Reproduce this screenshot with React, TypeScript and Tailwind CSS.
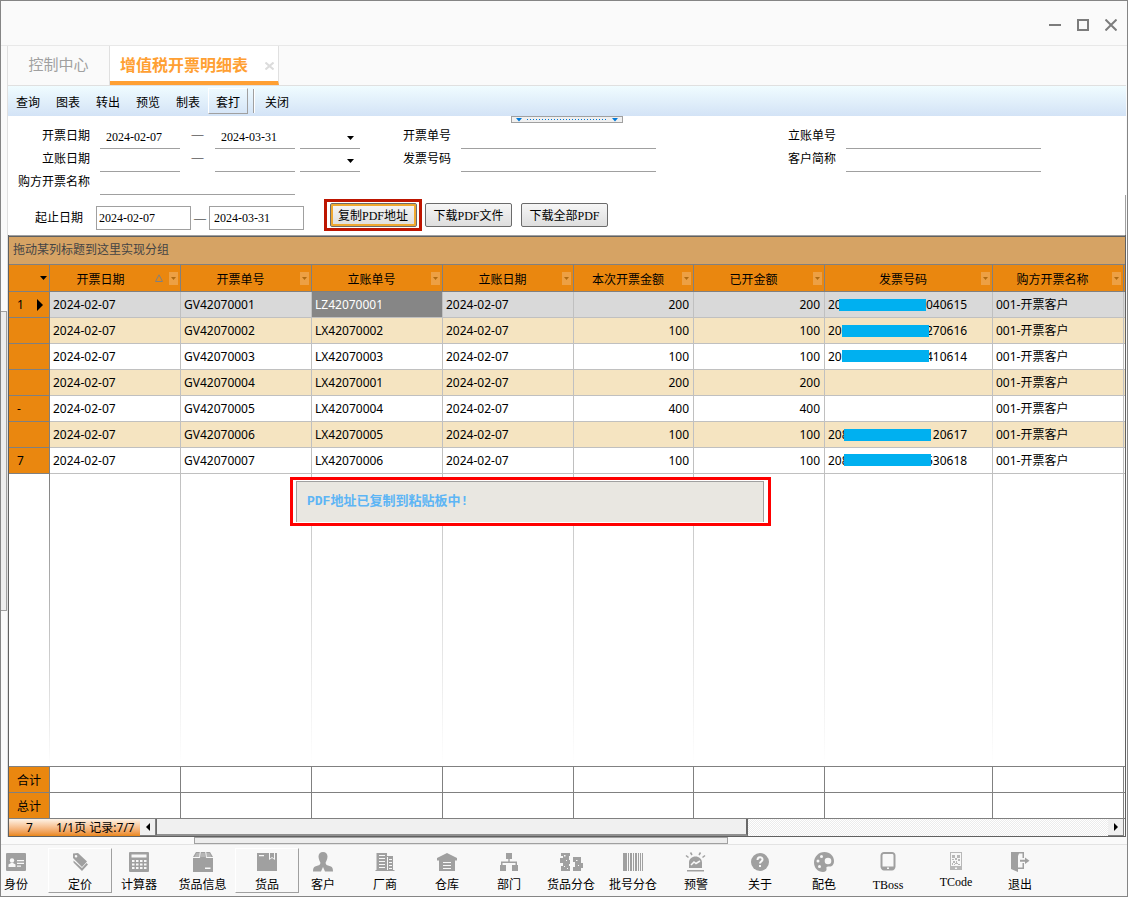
import React from 'react';
import clsx from 'clsx';

type Column = {
  key: string;
  title: string;
  width: string;
  align?: 'right';
  sorted?: boolean;
};

const columns: Column[] = [
  { key: 'invoiceDate', title: '开票日期', width: 'w-[131px]', sorted: true },
  { key: 'invoiceNo', title: '开票单号', width: 'w-[131px]' },
  { key: 'ledgerNo', title: '立账单号', width: 'w-[131px]' },
  { key: 'ledgerDate', title: '立账日期', width: 'w-[131px]' },
  { key: 'amount', title: '本次开票金额', width: 'w-[120px]', align: 'right' },
  { key: 'billed', title: '已开金额', width: 'w-[131px]', align: 'right' },
  { key: 'taxNo', title: '发票号码', width: 'w-[168px]' },
  { key: 'buyer', title: '购方开票名称', width: 'w-[131px]' },
];

type TaxNo = { head: string; tail: string; mask: string };

type Row = {
  mark: string;
  invoiceNo: string;
  ledgerNo: string;
  amount: number;
  taxNo?: TaxNo;
};

const rows: Row[] = [
  { mark: '1', invoiceNo: 'GV42070001', ledgerNo: 'LZ42070001', amount: 200, taxNo: { head: '20', tail: '040615', mask: 'left-[11px] top-0.5' } },
  { mark: '', invoiceNo: 'GV42070002', ledgerNo: 'LX42070002', amount: 100, taxNo: { head: '20', tail: '270616', mask: 'left-[14px] top-0.5' } },
  { mark: '', invoiceNo: 'GV42070003', ledgerNo: 'LX42070003', amount: 100, taxNo: { head: '20', tail: '410614', mask: 'left-[14px] top-px' } },
  { mark: '', invoiceNo: 'GV42070004', ledgerNo: 'LX42070001', amount: 200 },
  { mark: '-', invoiceNo: 'GV42070005', ledgerNo: 'LX42070004', amount: 400 },
  { mark: '', invoiceNo: 'GV42070006', ledgerNo: 'LX42070005', amount: 100, taxNo: { head: '208', tail: '120617', mask: 'left-4 top-0.5' } },
  { mark: '7', invoiceNo: 'GV42070007', ledgerNo: 'LX42070006', amount: 100, taxNo: { head: '208', tail: '530618', mask: 'left-4 top-px' } },
];

const toolbar = ['查询', '图表', '转出', '预览', '制表', '套打'];

const navItems = [
  { label: '身份', icon: 'id', box: 'w-[30px] mr-[17px]' },
  { label: '定价', icon: 'tag', box: 'w-16', raised: true },
  { label: '计算器', icon: 'calc', box: 'w-[54px]' },
  { label: '货品信息', icon: 'box', box: 'ml-1 w-[65px]' },
  { label: '货品', icon: 'goods', box: 'w-16', raised: true },
  { label: '客户', icon: 'person', box: 'w-12 mr-[7px]' },
  { label: '厂商', icon: 'building', box: 'w-[62px]' },
  { label: '仓库', icon: 'warehouse', box: 'w-[62px]' },
  { label: '部门', icon: 'org', box: 'w-[62px]' },
  { label: '货品分仓', icon: 'split', box: 'w-[62px]' },
  { label: '批号分仓', icon: 'barcode', box: 'w-[62px]' },
  { label: '预警', icon: 'alarm', box: 'w-16' },
  { label: '关于', icon: 'about', box: 'w-16' },
  { label: '配色', icon: 'palette', box: 'w-16' },
  { label: 'TBoss', icon: 'phone', box: 'w-16' },
  { label: 'TCode', icon: 'qr', box: 'ml-1 w-16', tight: true },
  { label: '退出', icon: 'exit', box: 'w-16' },
];

const icons: Record<string, React.ReactNode> = {
  id: (
    <>
      <rect x="0" y="1" width="20" height="18" rx="1" />
      <g fill="#f8f8f8">
        <circle cx="6" cy="8.500" r="2.200" />
        <path d="M2.500 15v-2.500l2.500-1.500h2l2.500 1.500V15z" />
        <path d="M11 8h7v1.300h-7zM11 10.700h7V12h-7zM11 13.500h4v1.300h-4z" />
      </g>
    </>
  ),
  tag: (
    <>
      <path fillRule="evenodd" d="M3 1.500 8 1l9 8.500-5 5.500L3 6zM6 3a1.300 1.300 0 1 0 .1 2.600A1.300 1.300 0 0 0 6 3z" />
      <path d="M3.500 8.500v2L12 19l6-6.500-1.500-1.500L12 16z" />
    </>
  ),
  calc: (
    <>
      <rect x="0" y="0" width="20" height="20" rx="1" />
      <path fill="#f8f8f8" d="M2.500 2.500h15v3h-15zM3 8h2.500v2H3zM7 8h2.500v2H7zM11 8h2.500v2H11zM15 8h2.500v2H15zM3 11.500h2.500v2H3zM7 11.500h2.500v2H7zM11 11.500h2.500v2H11zM15 11.500h2.500v2H15zM3 15h2.500v2H3zM7 15h2.500v2H7zM11 15h2.500v2H11zM15 15h2.500v2H15z" />
    </>
  ),
  box: (
    <>
      <path d="M3 0h14l3 5v15H0V5z" />
      <path fill="#f8f8f8" d="M3.500 1H7l-.8 4H1.500zM8.300 1h3.400l.5 4H7.600zM13 1h3.500l2 4h-4.700z" opacity=".25" />
      <path fill="#f8f8f8" d="M0 5h6v1H0zM14 5h6v1h-6zM6.800 0h1L7 6H6zM12.200 0h1l.8 6h-1zM12 15.500h5.500V17H12z" />
    </>
  ),
  goods: (
    <>
      <path d="M0 1h20v18H0z" />
      <path fill="#f8f8f8" d="M2 3h5v1.300H2zM12 1h1v5.500l2-1.500 2 1.500V1h1v7l-3-2-3 2z" />
    </>
  ),
  person: (
    <path d="M10 0c2.800 0 4.500 1.900 4.500 4.500S13 9.500 12.500 11l1 2 4.500 1.500c1.500.5 2 2.500 2 5h-8L10 15l-2 4.500H0c0-2.500.5-4.500 2-5L6.500 13l1-2C7 9.500 5.500 7 5.500 4.500S7.200 0 10 0z" />
  ),
  building: (
    <>
      <path d="M1.500 1H12v3h6v14h1.500v1H.5v-1h1z" />
      <path fill="#f8f8f8" d="M4 3h6v1H4zM4 6h6v1H4zM4 9h6v1H4zM4 12h6v1H4zM4 15h6v1H4zM12 5h1v13h-1zM14 7h3v1h-3zM14 10h3v1h-3zM14 13h3v1h-3zM14 16h3v1h-3z" />
    </>
  ),
  warehouse: (
    <>
      <path d="m10 1 10 5v2.500h-2V19H2V8.500H0V6z" />
      <path fill="#f8f8f8" d="M6 10h8v1H6zM6 13h8v1H6zM6 16h8v1H6z" />
    </>
  ),
  org: <path d="M7 1h6v6h-2.300v2.500H18V13h1v6h-6v-6h3.500v-2h-13v2H7v6H1v-6h1V9.500h7.300V7H7z" />,
  split: (
    <>
      <path d="M0 1h9v3H8v4h1v4H8v2h1v5H0v-5h2v-3H-1V6h3V4H0zM12 5h8v6h2v5h-2v3h-8v-4h2v-5h-2z" />
      <path fill="#f8f8f8" d="M3 3h1.500v1.500H3zM5 8h1v1H5zM3 14h1v1H3zM6 16h1v1H6zM15 8h1.500v1H15zM17 13h1v1h-1z" />
    </>
  ),
  barcode: <path d="M0 1h4v18H0zM5 1h1v18H5zM7 1h2v18H7zM10 1h1v18h-1zM12 1h2v18h-2zM15 1h1v18h-1zM17 1h1v18h-1zM19 1h1v18h-1z" />,
  alarm: (
    <>
      <path d="M3 16v-5.500C3 7 6 4.500 9.500 4.500S16 7 16 10.500V16zM1 18h17v1.500H1z" />
      <path d="M6 3 4.500.5M13 3 14.500.5M2.500 5.500 0 3.500M16.500 5.500 19 3.500" fill="none" stroke="#a0a0a0" strokeWidth="1.500" />
      <path d="m5 13 3-3 2 1.500L14 9" fill="none" stroke="#f8f8f8" strokeWidth="1.500" />
    </>
  ),
  about: (
    <>
      <circle cx="10" cy="10" r="9" />
      <path d="M7.500 8c0-3.500 5-3.500 5-.5 0 2-2.500 2-2.500 4" fill="none" stroke="#f8f8f8" strokeWidth="2" />
      <path fill="#f8f8f8" d="M9 13h2v2H9z" />
    </>
  ),
  palette: (
    <path fillRule="evenodd" d="M10.500 0C16 0 20 4 20 9c0 4-2.500 6-5 5.500-2-.4-3 .5-2.500 2 .5 2-1 3.500-3.500 3.500C4 20 0 16 0 10.500S4.500 0 10.500 0zM14 5.700a3.300 3.300 0 1 0 0 6.600 3.300 3.300 0 0 0 0-6.600zM7.500 3a1.500 1.500 0 1 0 0 3 1.500 1.500 0 0 0 0-3zM4 7.500a1.500 1.500 0 1 0 0 3 1.500 1.500 0 0 0 0-3zM5.500 13a1.500 1.500 0 1 0 0 3 1.500 1.500 0 0 0 0-3z" />
  ),
  phone: (
    <path fillRule="evenodd" d="M6 0h8c2 0 3.500 1.500 3.500 3.500v11c0 2-1.500 4-3.500 4H6c-2 0-3.500-2-3.500-4v-11C2.500 1.500 4 0 6 0zm0 2C5 2 4.500 2.500 4.500 3.500v11H15.500v-11C15.500 2.500 15 2 14 2zm3 13.500V17h2v-1.500z" />
  ),
  qr: (
    <g fill="#b8b8b8">
      <path fillRule="evenodd" d="M4 0h12v18H4zm1 1v13h10V1zM9 15.500V17h2v-1.500z" />
      <path d="M6 3h3v3H6zM11 3h3v3h-3zM9 6h2v2H9zM6 7h2v1H6zM12 7h2v2h-2zM7 9h2v2H7zM10 9h1v2h-1zM6 11h1v2H6zM9 11h3v1H9zM12 12h2v1h-2zM8 12h1v1H8z" />
    </g>
  ),
  exit: (
    <>
      <path d="M1 0h13v6h-1.500V1.500H9L8 4v16l-7-3z" />
      <path d="M8 15.500h4.500V11H14v6H8zM10 7.700h5V5.500l4.500 3.300-4.500 3.200V9.800h-5z" />
    </>
  ),
};

function DateLine({ id, label, from, to }: { id: string; label: string; from: string; to: string }) {
  return (
    <div className="flex h-[23px]">
      <label htmlFor={id} className="w-[82px] text-right leading-5">{label}</label>
      <input id={id} defaultValue={from} className="ml-2.5 w-20 border-b border-[#a0a0a0] px-1.5 outline-none" />
      <span className="w-[35px] text-center leading-4">—</span>
      <input aria-label={label + '止'} defaultValue={to} className="w-20 border-b border-[#a0a0a0] px-1.5 outline-none" />
      <div className="relative ml-[5px] w-[60px]">
        <select aria-label={label + '范围'} className="h-full w-full appearance-none border-b border-[#a0a0a0] outline-none">
          <option value="" />
        </select>
        <svg className="pointer-events-none absolute top-2.5 right-1.5" width="7" height="4" viewBox="0 0 7 4">
          <path d="M0 0h7L3.500 4z" />
        </svg>
      </div>
    </div>
  );
}

function LineField({ id, label, labelWidth }: { id: string; label: string; labelWidth: string }) {
  return (
    <div className="flex h-[23px]">
      <label htmlFor={id} className={clsx(labelWidth, 'text-right leading-5')}>{label}</label>
      <input id={id} className="ml-2.5 w-[195px] border-b border-[#a0a0a0] px-1.5 outline-none" />
    </div>
  );
}

function PdfButton({ children, active }: { children: React.ReactNode; active?: boolean }) {
  return (
    <button
      className={clsx(
        'h-6 w-[87px] rounded-[2px] border border-[#6b6b6b] bg-gradient-to-b from-[#f6f6f6] to-[#dedede] pt-0.5 whitespace-nowrap',
        active && 'shadow-[inset_0_0_0_2px_#f0a830]'
      )}
    >
      {children}
    </button>
  );
}

function Filters() {
  return (
    <section className="relative pt-2.5">
      <div className="absolute top-0 left-1/2 flex h-[7px] w-28 -translate-x-1/2 items-center justify-between border border-[#a0a0a0] bg-[#f0f0f0] px-1">
        <svg width="6" height="4" viewBox="0 0 6 4"><path fill="#0078d7" d="M0 0h6L3 3.500z" /></svg>
        <svg width="80" height="1" viewBox="0 0 80 1"><path stroke="#0078d7" strokeDasharray="1 2" d="M0 .5h80" /></svg>
        <svg width="6" height="4" viewBox="0 0 6 4"><path fill="#0078d7" d="M0 0h6L3 3.500z" /></svg>
      </div>
      <div className="flex">
        <div>
          <DateLine id="invoice-date" label="开票日期" from="2024-02-07" to="2024-03-31" />
          <DateLine id="ledger-date" label="立账日期" from="" to="" />
          <div className="flex h-[23px]">
            <label htmlFor="buyer" className="w-[82px] text-right leading-5">购方开票名称</label>
            <input id="buyer" className="ml-2.5 w-[195px] border-b border-[#a0a0a0] px-1.5 outline-none" />
          </div>
        </div>
        <div>
          <LineField id="invoice-no" label="开票单号" labelWidth="w-[91px]" />
          <LineField id="tax-no" label="发票号码" labelWidth="w-[91px]" />
        </div>
        <div>
          <LineField id="ledger-no" label="立账单号" labelWidth="w-[180px]" />
          <LineField id="customer" label="客户简称" labelWidth="w-[180px]" />
        </div>
      </div>
      <div className="flex h-10 items-start border-r border-[#a0a0a0] pt-1">
        <div className="mt-[7px] flex h-6 items-center">
          <label htmlFor="range-from" className="w-[75px] text-right">起止日期</label>
          <input id="range-from" defaultValue="2024-02-07" className="ml-[13px] h-6 w-[95px] border border-[#a0a0a0] px-0.5 outline-none" />
          <span className="w-[18px] text-center leading-4">—</span>
          <input aria-label="截止日期" defaultValue="2024-03-31" className="h-6 w-[95px] border border-[#a0a0a0] px-1 outline-none" />
        </div>
        <div className="ml-5 flex h-8 w-[98px] items-center justify-center border-[3px] border-[#bd1500]">
          <PdfButton active>复制PDF地址</PdfButton>
        </div>
        <div className="mt-1 ml-[3px] flex gap-[9px]">
          <PdfButton>下载PDF文件</PdfButton>
          <PdfButton>下载全部PDF</PdfButton>
        </div>
      </div>
    </section>
  );
}

function ColGroup() {
  return (
    <colgroup>
      <col className="w-[41px]" />
      {columns.map((c) => (
        <col key={c.key} className={c.width} />
      ))}
      <col />
    </colgroup>
  );
}

function TaxNoCell({ value }: { value: TaxNo }) {
  return (
    <span className="relative flex">
      <span className="w-[98px]">{value.head}</span>
      <span>{value.tail}</span>
      <span className={clsx('absolute h-3 w-[87px] bg-[#00b0f0]', value.mask)} />
    </span>
  );
}

function cellValue(row: Row, key: string): React.ReactNode {
  switch (key) {
    case 'invoiceNo':
      return row.invoiceNo;
    case 'ledgerNo':
      return row.ledgerNo;
    case 'amount':
    case 'billed':
      return row.amount;
    case 'taxNo':
      return row.taxNo ? <TaxNoCell value={row.taxNo} /> : null;
    case 'buyer':
      return '001-开票客户';
    default:
      return '2024-02-07';
  }
}

function Grid() {
  return (
    <section className="flex flex-1 flex-col border border-t-0 border-[#606060] font-[family-name:'Noto_Sans','Noto_Sans_CJK_SC',sans-serif]">
      <div className="h-0.5 border-t border-b border-t-[#a0a0a0] border-b-[#606060]" />
      <div className="h-[27px] bg-[#d6a364] px-1 pt-px leading-6 text-[#444]">拖动某列标题到这里实现分组</div>
      <table className="w-full table-fixed border-separate border-spacing-0">
        <ColGroup />
        <thead>
          <tr className="h-7 bg-[#ea870f]">
            <th className="border-y border-r border-[#808080] p-0">
              <svg className="mr-0.5 ml-auto" width="7" height="4" viewBox="0 0 7 4"><path d="M0 0h7L3.500 4z" /></svg>
            </th>
            {columns.map((c) => (
              <th key={c.key} className="border-y border-r border-[#808080] p-0 font-normal">
                <div className="flex items-center pr-0.5">
                  <span className="flex-1 pt-1 text-center whitespace-nowrap">{c.title}</span>
                  {c.sorted && (
                    <svg className="mr-1.5 ml-1" width="8" height="8" viewBox="0 0 8 8">
                      <path d="M4 .8 7.500 7.500H.5z" fill="none" stroke="#808080" />
                    </svg>
                  )}
                  <button aria-label={c.title + '筛选'} className="flex h-[13px] w-[9px] items-center justify-center bg-[#eda044]">
                    <svg width="5" height="3" viewBox="0 0 5 3"><path fill="#b06a10" d="M0 0h5L2.500 3z" /></svg>
                  </button>
                </div>
              </th>
            ))}
            <th className="border-y border-[#808080] p-0" />
          </tr>
        </thead>
        <tbody>
          {rows.map((row, i) => (
            <tr key={row.invoiceNo} className={clsx('h-[26px]', i === 0 ? 'bg-[#d9d9d9]' : i % 2 ? 'bg-[#f5e4c1]' : 'bg-white')}>
              <td className="border-r border-b border-[#808080] bg-[#ea870f] p-0">
                <div className="flex items-center justify-between pr-1.5 pl-2">
                  <span>{row.mark}</span>
                  {i === 0 && <svg width="6" height="12" viewBox="0 0 6 12"><path d="M0 0v12l6-6z" /></svg>}
                </div>
              </td>
              {columns.map((c) => (
                <td
                  key={c.key}
                  className={clsx(
                    'border-r border-b border-[#c0c0c0] py-0 pr-1 pl-[3px] whitespace-nowrap',
                    c.align === 'right' && 'text-right',
                    i === 0 && c.key === 'ledgerNo' && 'bg-[#868686] text-white'
                  )}
                >
                  {cellValue(row, c.key)}
                </td>
              ))}
              <td className="border-b border-[#c0c0c0] p-0" />
            </tr>
          ))}
        </tbody>
      </table>

      <div className="relative flex flex-1">
        <div className="w-[41px] bg-gradient-to-b from-[#808080] to-white">
          <div className="mr-px h-full bg-white" />
        </div>
        {columns.map((c) => (
          <div key={c.key} className={clsx(c.width, 'shrink-0 bg-gradient-to-b from-[#c0c0c0] to-white')}>
            <div className="mr-px h-full bg-white" />
          </div>
        ))}
        <div role="status" className="absolute top-[3px] left-[281px] h-[49px] w-[481px] border-[3px] border-[#ff0000] bg-white py-px pr-1 pl-[3px]">
          <div className="h-full border-t border-r border-l border-[#a0a0a0] bg-[#e9e7e1] px-2.5 font-[family-name:'Liberation_Mono','Noto_Sans_CJK_SC',monospace] text-[13px] leading-10 font-bold text-[#5db5f5]">
            PDF地址已复制到粘贴板中!
          </div>
        </div>
      </div>

      <table className="w-full table-fixed border-separate border-spacing-0 border-t border-[#808080]">
        <ColGroup />
        <tbody>
          {['合计', '总计'].map((name) => (
            <tr key={name} className="h-[26px]">
              <th scope="row" className="border-r border-b border-[#808080] bg-[#ea870f] p-0 pt-0.5 font-normal">{name}</th>
              {columns.map((c) => (
                <td key={c.key} className="border-r border-b border-[#808080] p-0" />
              ))}
              <td className="border-b border-[#808080] p-0" />
            </tr>
          ))}
        </tbody>
      </table>

      <div className="flex h-[17px]">
        <div className="flex w-[131px] bg-gradient-to-b from-[#fdf3e6] to-[#ea870f] leading-[18px]">
          <span className="w-[41px] text-center">7</span>
          <span className="pl-1.5 whitespace-nowrap">1/1页 记录:7/7</span>
        </div>
        <button aria-label="向左" className="flex w-4 items-center justify-center border-r border-b border-[#808080] bg-[#f0f0f0]">
          <svg width="4" height="8" viewBox="0 0 4 8"><path d="M4 0v8L0 4z" /></svg>
        </button>
        <div className="flex flex-1 bg-[repeating-conic-gradient(#ffffff_0_25%,#ececec_0_50%)] bg-[length:2px_2px]">
          <div className="w-[592px] border-r-2 border-b-2 border-l border-r-[#696969] border-b-[#909090] border-l-[#696969] bg-[#f0f0f0]" />
        </div>
        <button aria-label="向右" className="mr-px flex w-4 items-center justify-center border-r border-b border-[#808080] bg-[#f0f0f0]">
          <svg width="4" height="8" viewBox="0 0 4 8"><path d="M0 0v8l4-4z" /></svg>
        </button>
      </div>
    </section>
  );
}

export default function App() {
  return (
    <div className="flex min-h-screen flex-col border border-[#858585] bg-[#fafafa] font-[family-name:'Liberation_Serif','Noto_Sans_CJK_SC',serif] text-xs text-black">
      <header className="flex h-[45px] items-center justify-end gap-4 border-b border-[#e8e8e8] pt-1 pr-2.5 text-[#7c7c7c]">
        <button aria-label="最小化">
          <svg width="12" height="12" viewBox="0 0 12 12"><path fill="currentColor" d="M0 5h12v2H0z" /></svg>
        </button>
        <button aria-label="最大化">
          <svg width="12" height="12" viewBox="0 0 12 12"><path fill="none" stroke="currentColor" strokeWidth="2" d="M1 1h10v10H1z" /></svg>
        </button>
        <button aria-label="关闭窗口">
          <svg width="12" height="12" viewBox="0 0 12 12"><path stroke="currentColor" strokeWidth="2" d="m.5.5 11 11m0-11-11 11" /></svg>
        </button>
      </header>

      <div className="flex flex-1">
        <div className="w-1.5">
          <div className="mt-[265px] h-[300px] border border-l-0 border-[#a0a0a0] bg-[#ededed]" />
        </div>
        <div className="mr-px flex min-w-0 flex-1 flex-col border-l border-[#e0e0e0] bg-white">
          <nav className="flex h-10 border-b border-[#e0e0e0] bg-[#fafafa]">
            <button className="w-[102px] border-r border-[#e0e0e0] text-[15px] text-[#a0a0a0]">控制中心</button>
            <div className="flex w-[169px] items-center justify-between border-r border-b-4 border-[#e0e0e0] border-b-[#ffa033] bg-white pt-1 pr-1 pl-2.5">
              <button className="text-base font-bold whitespace-nowrap text-[#ffa033]">增值税开票明细表</button>
              <button aria-label="关闭标签">
                <svg width="9" height="8" viewBox="0 0 9 8"><path stroke="#dcdcdc" strokeWidth="2" d="m.5.5 8 7m0-7-8 7" /></svg>
              </button>
            </div>
          </nav>

          <div className="flex h-[30px] items-center bg-gradient-to-b from-[#f0fcff] to-[#d3e3f6]">
            {toolbar.map((name) => (
              <button
                key={name}
                className={clsx('h-[26px] w-10 pt-1', name === '套打' && 'border border-t-white border-r-[#a0a0a0] border-b-[#a0a0a0] border-l-white')}
              >
                {name}
              </button>
            ))}
            <span className="ml-[5px] h-6 w-0.5 border-r border-l border-r-white border-l-[#a0a0a0]" />
            <button className="ml-0.5 h-[26px] w-10 pt-1">关闭</button>
          </div>

          <Filters />
          <Grid />
        </div>
      </div>

      <div className="flex h-[7px]">
        <div className="ml-[193px] w-[534px] border border-[#a0a0a0] bg-[#ededed]" />
      </div>
      <footer className="flex h-[52px] items-start border-t border-[#e3e3e3] bg-[#f8f8f8] pt-[3px]">
        {navItems.map((item) => (
          <button
            key={item.label}
            className={clsx(
              'flex h-[45px] shrink-0 flex-col items-center border pt-[3px] whitespace-nowrap',
              item.box,
              item.raised ? 'border-t-white border-r-[#a0a0a0] border-b-[#a0a0a0] border-l-white' : 'border-transparent'
            )}
          >
            <svg className="shrink-0 overflow-visible" width="20" height="20" viewBox="0 0 20 20" fill="#a0a0a0">{icons[item.icon]}</svg>
            <span className={clsx('leading-5', item.tight ? 'pt-0' : 'pt-[3px]')}>{item.label}</span>
          </button>
        ))}
      </footer>
    </div>
  );
}
